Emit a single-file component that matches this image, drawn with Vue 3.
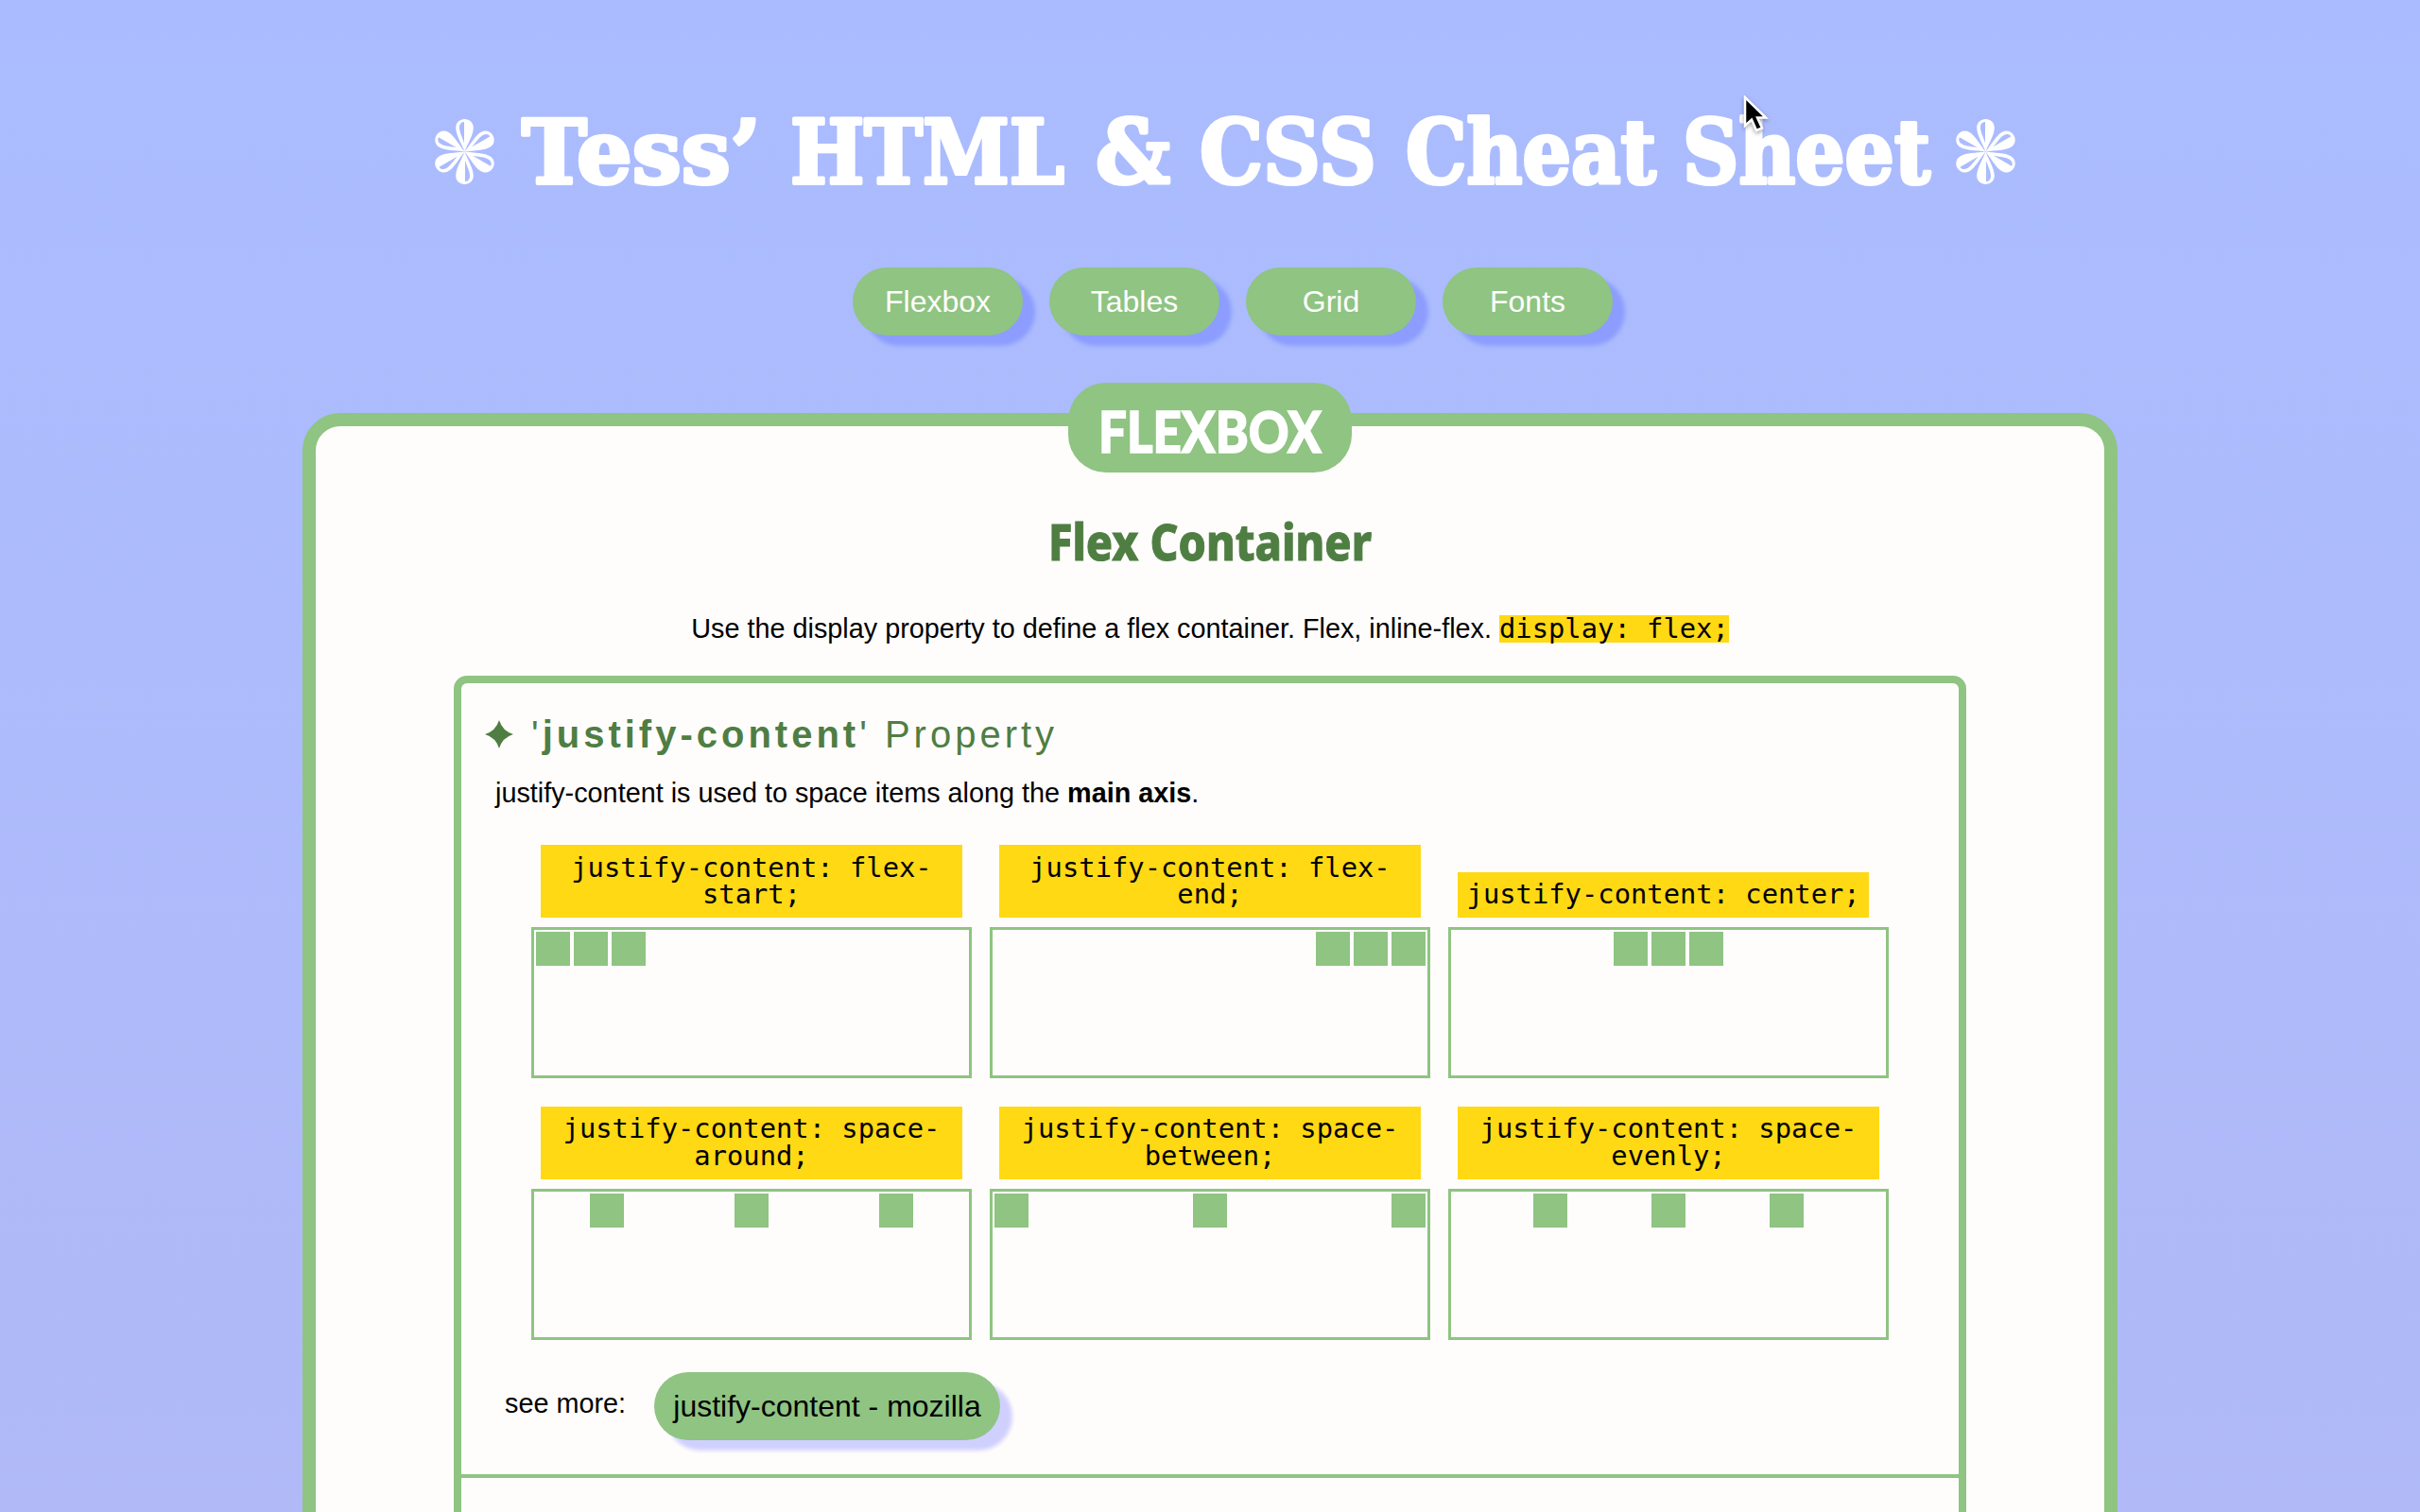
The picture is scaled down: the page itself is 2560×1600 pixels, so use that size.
<script setup>
const words = [
  { text: 'Tess’', x: 552, w: 253 },
  { text: 'HTML', x: 836, w: 290 },
  { text: '&', x: 1159, w: 79 },
  { text: 'CSS', x: 1269, w: 187 },
  { text: 'Cheat', x: 1487, w: 265 },
  { text: 'Sheet', x: 1780, w: 262 },
]
const stars = [491.5, 2100.5]
const petals = [0, 60, 120, 180, 240, 300]
const links = ['Flexbox', 'Tables', 'Grid', 'Fonts']
const demos = ['flex-start', 'flex-end', 'center', 'space-around', 'space-between', 'space-evenly']
</script>

<template>
  <div class="page">
    <svg class="title" width="2560" height="140" viewBox="0 85 2560 140">
      <g v-for="cx in stars" :key="cx" :transform="`translate(${cx} 160.5)`">
        <g v-for="a in petals" :key="a" :transform="`rotate(${a})`">
          <path class="petal" d="M0 0C-4-10-9.300-18-9.300-25.500C-9.300-31-5-34.500 0-34.500S9.300-31 9.300-25.500C9.300-18 4-10 0 0Z" />
          <path class="hollow" d="M-.5-9C-2-15-5.500-20-5.500-25.500C-5.500-29.500-3.300-31.500-.5-31.500Z" />
        </g>
      </g>
      <text
        v-for="w in words"
        :key="w.text"
        class="word"
        :x="w.x"
        y="193.5"
        :textLength="w.w"
        lengthAdjust="spacingAndGlyphs"
      >{{ w.text }}</text>
    </svg>

    <nav class="nav">
      <a v-for="l in links" :key="l" class="pill">{{ l }}</a>
    </nav>

    <main class="card">
      <h2 class="badge">
        <svg width="300" height="95">
          <text x="32" y="74" textLength="236" lengthAdjust="spacingAndGlyphs">FLEXBOX</text>
        </svg>
      </h2>
      <h3 class="subtitle">
        <svg width="360" height="64">
          <text x="9" y="47" textLength="342" lengthAdjust="spacingAndGlyphs">Flex Container</text>
        </svg>
      </h3>
      <p class="intro">
        Use the display property to define a flex container. Flex, inline-flex.
        <code>display: flex;</code>
      </p>

      <section class="panel">
        <h4 class="heading">
          <svg class="spark" width="32" height="32" viewBox="0 0 32 32">
            <path d="M16 1Q19.500 12.500 31 16Q19.500 19.500 16 31Q12.500 19.500 1 16Q12.500 12.500 16 1Z" />
          </svg>
          <span>'<b>justify-content</b>' Property</span>
        </h4>
        <p class="text">justify-content is used to space items along the <b>main axis</b>.</p>

        <div class="demos">
          <div v-for="d in demos" :key="d" class="demo">
            <code>justify-content: {{ d }};</code>
            <div class="box" :class="d"><i></i><i></i><i></i></div>
          </div>
        </div>

        <div class="more">
          <span>see more:</span>
          <a class="pill link">justify-content - mozilla</a>
        </div>
        <hr class="rule" />
      </section>
    </main>

    <svg class="cursor" width="32" height="44" viewBox="0 0 32 44">
      <path d="M3 2V32L10 25.500L15 37L21 34.500L16 23.500H25Z" />
    </svg>
  </div>
</template>

<style>
body {
  margin: 0;
  overflow: hidden;
}
</style>

<style scoped>
.page {
  position: relative;
  display: flex;
  flex-direction: column;
  width: 2560px;
  height: 1600px;
  overflow: hidden;
  background: linear-gradient(#aabcff, #b1b9f7);
  font-family: "Liberation Sans", Arial, sans-serif;
  font-size: 28.8px;
  line-height: 33px;
  color: #000;
}
.title {
  display: block;
  flex: none;
  margin-top: 85px;
}
.word {
  font-family: "DejaVu Serif", serif;
  font-weight: 700;
  font-size: 93px;
  fill: #fff;
  stroke: #fff;
  stroke-width: 4px;
  stroke-linejoin: round;
}
.petal {
  fill: #fff;
}
.hollow {
  fill: #abbcfe;
}
.nav {
  display: flex;
  flex: none;
  gap: 28px;
  margin: 58px 0 0 902px;
}
.pill {
  box-sizing: border-box;
  width: 180px;
  height: 72px;
  border-radius: 36px;
  background: #8fc482;
  box-shadow: 13px 11px 4px #8c9dff;
  color: #fff;
  font-size: 32px;
  line-height: 72px;
  text-align: center;
}
.card {
  box-sizing: border-box;
  flex: none;
  width: 1920px;
  height: 1400px;
  margin: 82px 0 0 320px;
  padding: 0 146px;
  border: 14px solid #8fc482;
  border-radius: 40px;
  background: #fffdfc;
}
.badge {
  width: 300px;
  height: 95px;
  margin: -46px auto 0;
  border-radius: 40px;
  background: #8fc482;
}
.badge svg,
.subtitle svg {
  display: block;
  overflow: visible;
}
.badge text {
  font-family: Lato, sans-serif;
  font-weight: 900;
  font-size: 60px;
  fill: #fff;
  stroke: #fff;
  stroke-width: 1.5px;
}
.subtitle {
  width: 360px;
  height: 64px;
  margin: 46px auto 0;
}
.subtitle text {
  font-family: "Noto Sans", sans-serif;
  font-weight: 800;
  font-size: 53px;
  fill: #4f7e43;
  stroke: #4f7e43;
  stroke-width: 1px;
}
.intro {
  margin: 39px 0 0;
  text-align: center;
  white-space: nowrap;
}
code {
  display: inline-block;
  background: #ffd914;
  font-family: "DejaVu Sans Mono", monospace;
  font-size: 28.8px;
  line-height: 28.8px;
}
.panel {
  box-sizing: border-box;
  width: 1600px;
  height: 900px;
  margin-top: 33px;
  border: 8px solid #8fc482;
  border-radius: 14px;
}
.heading {
  display: flex;
  align-items: center;
  gap: 18px;
  height: 46px;
  margin: 31px 0 0 24px;
  color: #4f7e43;
  font-weight: 400;
  font-size: 40px;
  letter-spacing: 4px;
}
.spark {
  fill: #4f7e43;
}
.text {
  margin: 23px 0 0 36px;
}
.demos {
  display: grid;
  grid-template-columns: repeat(3, 466px);
  column-gap: 19px;
  row-gap: 20px;
  align-items: end;
  margin: 28px 0 0 74px;
}
.demo code {
  box-sizing: border-box;
  display: block;
  width: fit-content;
  max-width: 446px;
  margin: 10px;
  padding: 9.6px;
  text-align: center;
}
.box {
  box-sizing: border-box;
  display: flex;
  height: 160px;
  border: 3px solid #8fc482;
}
.box i {
  width: 36px;
  height: 36px;
  margin: 2px;
  background: #8fc482;
}
.flex-end {
  justify-content: flex-end;
}
.center {
  justify-content: center;
}
.space-around {
  justify-content: space-around;
}
.space-between {
  justify-content: space-between;
}
.space-evenly {
  justify-content: space-evenly;
}
.more {
  display: flex;
  align-items: center;
  margin: 34px 0 0 46px;
}
.more span {
  width: 158px;
  margin-top: -4px;
}
.link {
  width: 366px;
  color: #000;
  box-shadow: 13px 11px 4px #d0d0ff;
}
.rule {
  height: 4px;
  margin: 36px 0 0;
  border: 0;
  background: #8fc482;
}
.cursor {
  position: absolute;
  left: 1843px;
  top: 101px;
  fill: #000;
  stroke: #fff;
  stroke-width: 2.5px;
  filter: drop-shadow(0 2px 2px rgba(0, 0, 0, 0.35));
}
</style>
